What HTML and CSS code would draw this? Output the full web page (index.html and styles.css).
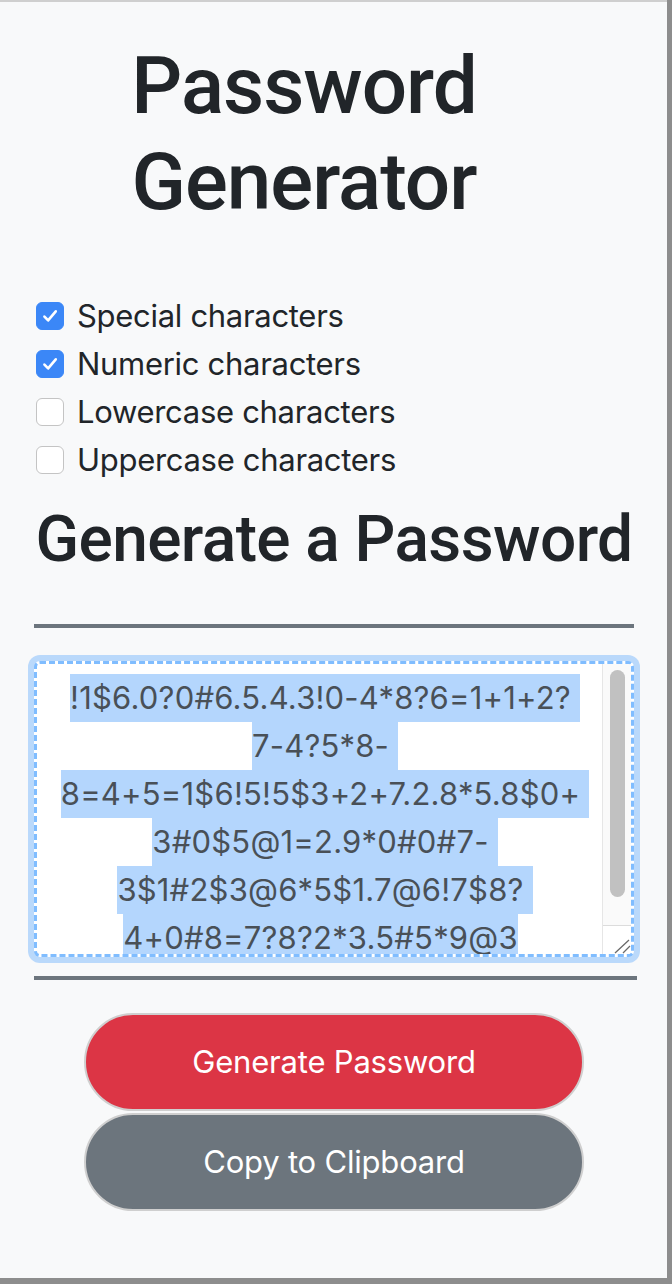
FILE: index.html
```html
<!DOCTYPE html>
<html lang="en">
<head>
<meta charset="utf-8">
<title>Password Generator</title>
<link rel="stylesheet" href="styles.css">
</head>
<body>
<div class="window">
  <main class="container">
    <h1 class="title">Password Generator</h1>
    <form class="options">
      <label class="option"><input type="checkbox" class="option-input" checked><span class="box"><svg viewBox="0 0 28 28" width="28" height="28"><path d="M8 14.6l4 4.2 8.2-9.8" fill="none" stroke="#fff" stroke-width="2.8" stroke-linecap="round" stroke-linejoin="round"/></svg></span>Special characters</label>
      <label class="option"><input type="checkbox" class="option-input" checked><span class="box"><svg viewBox="0 0 28 28" width="28" height="28"><path d="M8 14.6l4 4.2 8.2-9.8" fill="none" stroke="#fff" stroke-width="2.8" stroke-linecap="round" stroke-linejoin="round"/></svg></span>Numeric characters</label>
      <label class="option"><input type="checkbox" class="option-input"><span class="box"><svg viewBox="0 0 28 28" width="28" height="28"><path d="M8 14.6l4 4.2 8.2-9.8" fill="none" stroke="#fff" stroke-width="2.8" stroke-linecap="round" stroke-linejoin="round"/></svg></span>Lowercase characters</label>
      <label class="option"><input type="checkbox" class="option-input"><span class="box"><svg viewBox="0 0 28 28" width="28" height="28"><path d="M8 14.6l4 4.2 8.2-9.8" fill="none" stroke="#fff" stroke-width="2.8" stroke-linecap="round" stroke-linejoin="round"/></svg></span>Uppercase characters</label>
    </form>
    <h2 class="subtitle">Generate a Password</h2>
    <hr class="rule">
    <div class="pw-field">
      <textarea class="pw-box" readonly aria-label="Generated password">!1$6.0?0#6.5.4.3!0-4*8?6=1+1+2?
7-4?5*8-
8=4+5=1$6!5!5$3+2+7.2.8*5.8$0+
3#0$5@1=2.9*0#0#7-
3$1#2$3@6*5$1.7@6!7$8?
4+0#8=7?8?2*3.5#5*9@3</textarea>
      <div class="scrollbar" aria-hidden="true">
        <div class="scroll-track"><div class="scroll-thumb"></div></div>
        <div class="scroll-corner"><svg viewBox="0 0 28 28" width="28" height="28"><path d="M12 27L26 14M20 27L27 20" fill="none" stroke="#6a6a6a" stroke-width="1.3"/></svg></div>
      </div>
    </div>
    <hr class="rule rule-wide">
    <div class="actions">
      <button type="button" class="btn btn-red">Generate Password</button>
      <button type="button" class="btn btn-gray">Copy to Clipboard</button>
    </div>
  </main>
</div>
<script src="script.js"></script>
</body>
</html>
```

FILE: styles.css
```css
html {
  margin: 0;
  background: #8d8d8d;
}
body {
  margin: 0;
  font-family: Inter, "Liberation Sans", Arial, sans-serif;
  color: #212529;
}
.window {
  width: 667px;
  height: 1278px;
  box-sizing: border-box;
  background: #f8f9fa;
  border-top: 2px solid #cfcfcf;
}
.container {
  padding: 36px 33px 0 34px;
}
.title {
  margin: 0;
  max-width: 540px;
  text-align: center;
  font-family: Roboto, "Liberation Sans", Arial, sans-serif;
  font-size: 80px;
  line-height: 96px;
  font-weight: 500;
  letter-spacing: -1px;
}
.options {
  margin: 62px 0 0;
  display: flex;
  flex-direction: column;
}
.option {
  display: flex;
  align-items: center;
  gap: 13px;
  padding-left: 2px;
  font-size: 31px;
  line-height: 48px;
  letter-spacing: -0.3px;
}
.option-input {
  position: absolute;
  opacity: 0;
  width: 0;
  height: 0;
  margin: 0;
}
.box {
  width: 28px;
  height: 28px;
  box-sizing: border-box;
  border-radius: 6px;
  background: #fff;
  border: 1px solid #c4c4c4;
  display: flex;
  align-items: center;
  justify-content: center;
  flex: none;
}
.box svg {
  display: none;
}
.option-input:checked + .box {
  background: #3b87f7;
  border-color: #3b87f7;
}
.option-input:checked + .box svg {
  display: block;
}
.subtitle {
  margin: 18px 0 0;
  text-align: center;
  font-family: Roboto, "Liberation Sans", Arial, sans-serif;
  font-size: 64px;
  line-height: 76.8px;
  font-weight: 500;
  letter-spacing: -0.6px;
  white-space: nowrap;
}
.rule {
  margin: 45px 0 0;
  border: 0;
  height: 4px;
  background: #6c757d;
}
.rule-wide {
  margin: 19px -3px 0 0;
}
.pw-field {
  margin: 33px 0 0;
  width: 600px;
  height: 296px;
  box-sizing: border-box;
  display: flex;
  border: 3px dashed #80bdff;
  border-radius: 6px;
  background: #fff;
  box-shadow: 0 0 0 6px rgba(0, 123, 255, 0.25);
  overflow: hidden;
}
.pw-box {
  flex: 1;
  min-width: 0;
  margin: 0;
  padding: 10px 12px 0 14px;
  border: 0;
  background: transparent;
  outline: none;
  font-family: Inter, "Liberation Sans", Arial, sans-serif;
  font-size: 31px;
  line-height: 48px;
  letter-spacing: 0.2px;
  color: #495057;
  text-align: center;
  resize: none;
  overflow: hidden;
}
.pw-box:focus {
  outline: none;
}
.pw-box::selection {
  background: #b4d6fd;
  color: #495057;
}
.scrollbar {
  width: 29px;
  flex: none;
  display: flex;
  flex-direction: column;
  background: #fafafa;
  border-left: 1px solid #e6e6e6;
  box-sizing: border-box;
}
.scroll-track {
  flex: 1;
  padding: 6px 6px 0 7px;
}
.scroll-thumb {
  height: 227px;
  border-radius: 8px;
  background: #c1c1c1;
}
.scroll-corner {
  height: 28px;
  background: #fff;
  border-top: 1px solid #dcdcdc;
}
.scroll-corner svg {
  display: block;
}
.actions {
  margin: 33px auto 0;
  width: 500px;
  display: flex;
  flex-direction: column;
  gap: 2px;
}
.btn {
  height: 98px;
  border: 2px solid #cfcfcf;
  border-radius: 49px;
  color: #fff;
  font-family: Inter, "Liberation Sans", Arial, sans-serif;
  font-size: 31px;
  letter-spacing: -0.2px;
  cursor: pointer;
}
.btn-red {
  background: #dc3545;
}
.btn-gray {
  background: #6c757d;
}
```

FILE: script.js
```js
const box = document.querySelector('.pw-box');
box.focus();
box.setSelectionRange(0, box.value.length, 'backward');
box.scrollTop = 0;
```
